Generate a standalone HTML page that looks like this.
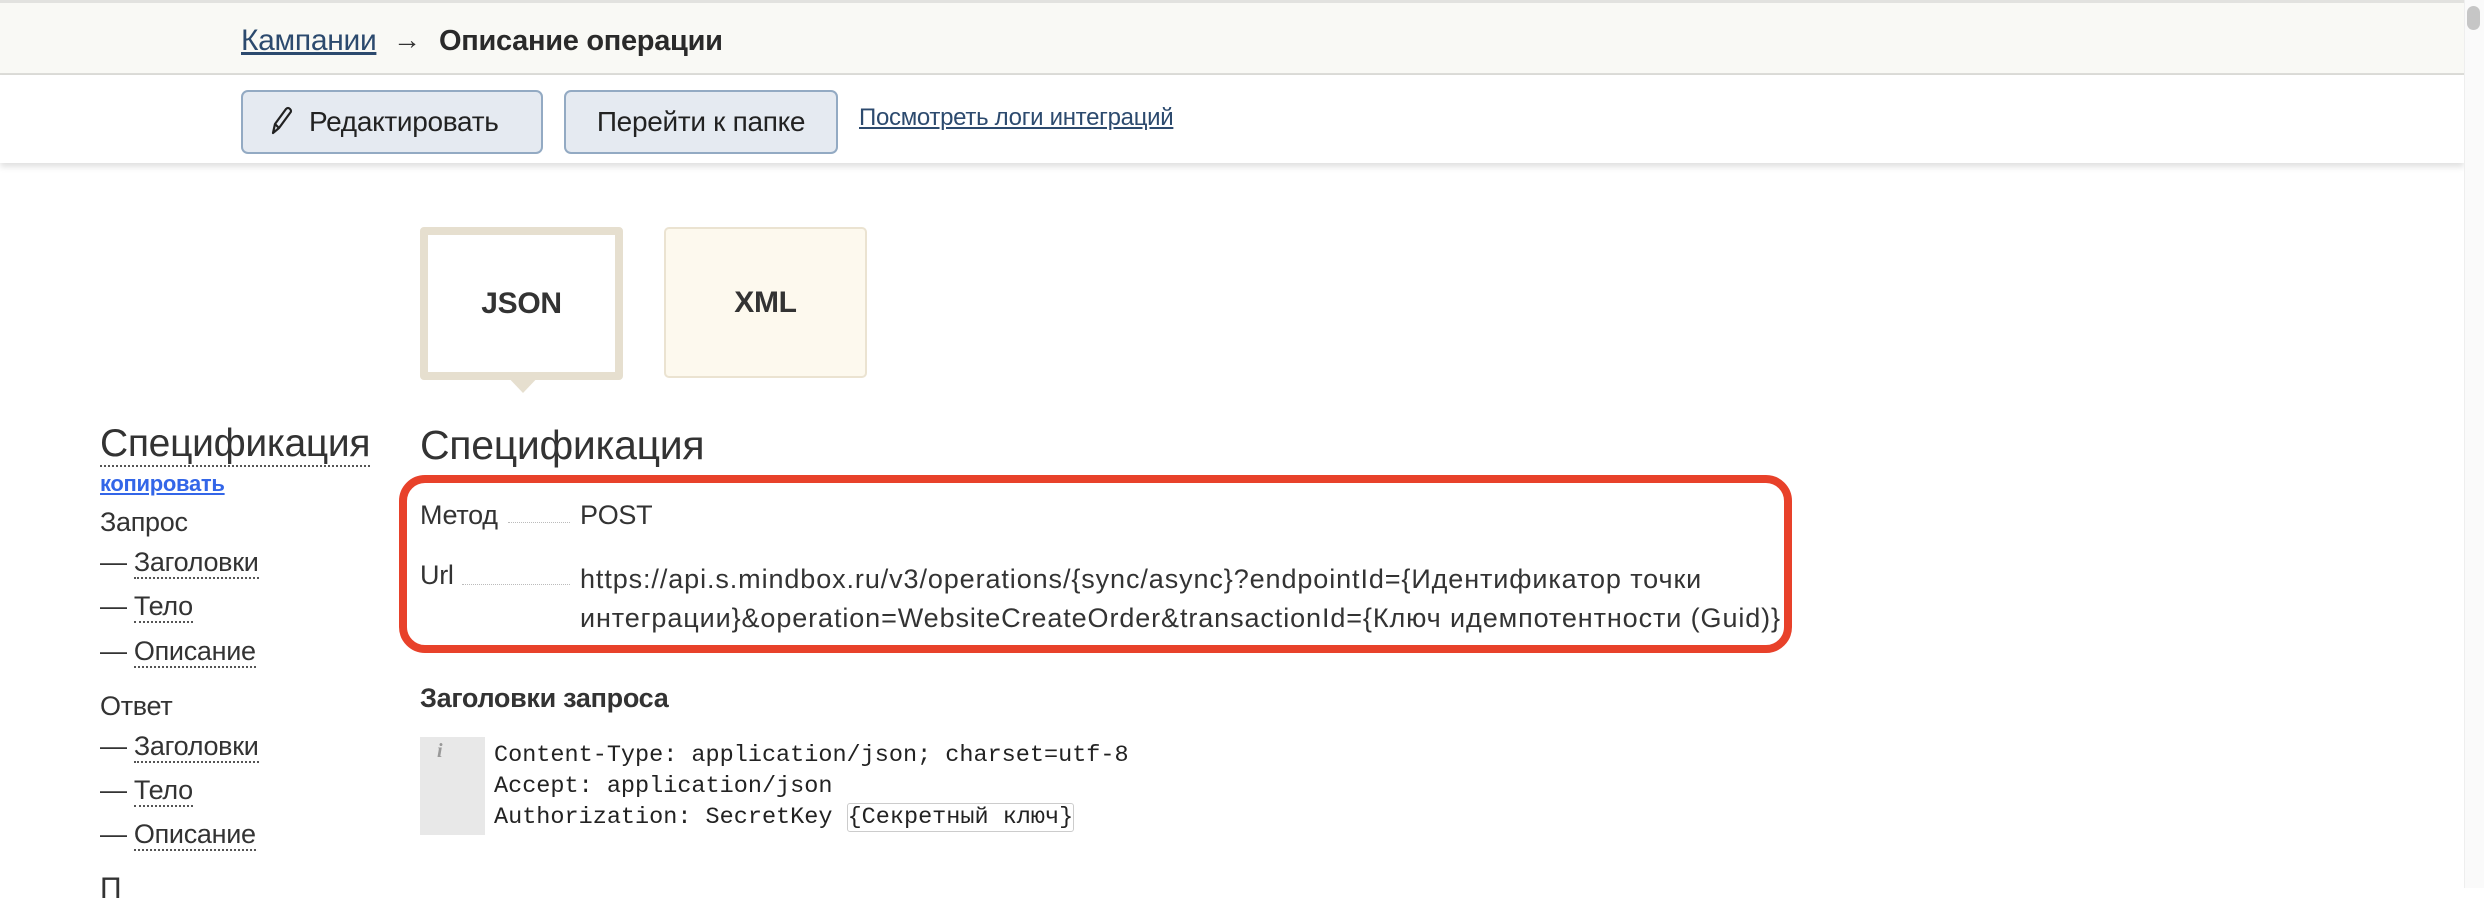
<!DOCTYPE html>
<html><head><meta charset="utf-8"><style>
*{margin:0;padding:0;box-sizing:border-box}
body{width:2484px;height:888px;overflow:hidden;background:#fff;font-family:"Liberation Sans",sans-serif;color:#333;position:relative;letter-spacing:-0.3px}
.a{position:absolute;white-space:nowrap}
.top{position:absolute;left:0;top:0;width:2464px;height:75px;background:#f9f9f5;border-top:3px solid #e2e2df;border-bottom:2px solid #dcdcd8}
.bar{position:absolute;left:0;top:75px;width:2464px;height:88px;background:#fff;box-shadow:0 4px 6px rgba(0,0,0,.12)}
.btn{position:absolute;top:90px;height:64px;background:#e5eaf1;border:2px solid #93aac3;border-radius:7px;font-size:28px;line-height:60px;color:#222}
.dash{border-bottom:2px dotted #555}
.scroll{position:absolute;left:2464px;top:0;width:20px;height:888px;background:#fafafa;border-left:1px solid #eee}
.thumb{position:absolute;left:2467px;top:6px;width:13px;height:24px;background:#c6c6c6;border-radius:7px}
.side{font-size:27px}
</style></head><body>
<div class="top"></div>
<div class="a" style="left:241px;top:24px;font-size:30px;color:#2c4a6e;text-decoration:underline;text-decoration-thickness:3px">Кампании</div>
<div class="a" style="left:393px;top:24px;font-size:28px">→</div>
<div class="a" style="left:439px;top:25px;font-size:29px;font-weight:bold;color:#2a2a2a">Описание операции</div>
<div class="bar"></div>
<div class="btn" style="left:241px;width:302px;padding-left:26px">
<svg width="24" height="30" viewBox="0 0 24 30" style="vertical-align:middle;margin-right:16px;margin-top:-6px"><path d="M4 27 L6 18 L17 3 Q19 1 21 3 Q23 5 21 7 L10 22 Z M6 18 L10 22" fill="none" stroke="#222" stroke-width="2.2" stroke-linejoin="round"/></svg>Редактировать</div>
<div class="btn" style="left:564px;width:274px;text-align:center">Перейти к папке</div>
<div class="a" style="left:859px;top:104px;font-size:24px;color:#2c4a6e;text-decoration:underline">Посмотреть логи интеграций</div>

<div class="a" style="left:420px;top:227px;width:203px;height:153px;border:8px solid #e6dfcf;border-radius:4px;background:#fff;font-size:30px;font-weight:bold;text-align:center;line-height:137px;color:#333">JSON</div>
<svg class="a" style="left:503px;top:372px" width="40" height="22"><path d="M0 0 L20 21 L40 0 Z" fill="#e6dfcf"/></svg>
<div class="a" style="left:664px;top:227px;width:203px;height:151px;border:2px solid #ebe3d1;border-radius:5px;background:#fdf9ee;font-size:30px;font-weight:bold;text-align:center;line-height:147px;color:#333">XML</div>

<div class="a" style="left:100px;top:422px;font-size:39px;color:#333"><span class="dash">Спецификация</span></div>
<div class="a" style="left:100px;top:471px;font-size:22px;font-weight:bold;color:#3366e8;text-decoration:underline">копировать</div>
<div class="a side" style="left:100px;top:507px">Запрос</div>
<div class="a side" style="left:100px;top:547px">— <span class="dash">Заголовки</span></div>
<div class="a side" style="left:100px;top:591px">— <span class="dash">Тело</span></div>
<div class="a side" style="left:100px;top:636px">— <span class="dash">Описание</span></div>
<div class="a side" style="left:100px;top:691px">Ответ</div>
<div class="a side" style="left:100px;top:731px">— <span class="dash">Заголовки</span></div>
<div class="a side" style="left:100px;top:775px">— <span class="dash">Тело</span></div>
<div class="a side" style="left:100px;top:819px">— <span class="dash">Описание</span></div>
<div class="a side" style="left:100px;top:872px;font-size:30px">П</div>

<div class="a" style="left:420px;top:422px;font-size:41px">Спецификация</div>
<div class="a" style="left:399px;top:475px;width:1393px;height:178px;border:8px solid #e8412a;border-radius:26px"></div>
<div class="a" style="left:420px;top:500px;font-size:27px">Метод</div>
<div class="a" style="left:508px;top:522px;width:62px;border-bottom:1px dotted #bbb"></div>
<div class="a" style="left:580px;top:500px;font-size:27px">POST</div>
<div class="a" style="left:420px;top:560px;font-size:27px">Url</div>
<div class="a" style="left:462px;top:584px;width:108px;border-bottom:1px dotted #bbb"></div>
<div class="a" style="left:580px;top:560px;font-size:27px;line-height:39px;letter-spacing:0.9px">https://api.s.mindbox.ru/v3/operations/{sync/async}?endpointId={Идентификатор точки<br>интеграции}&amp;operation=WebsiteCreateOrder&amp;transactionId={Ключ идемпотентности (Guid)}</div>

<div class="a" style="left:420px;top:683px;font-size:27px;font-weight:bold">Заголовки запроса</div>
<div class="a" style="left:420px;top:737px;width:65px;height:98px;background:#e8e8e8"></div>
<div class="a" style="left:437px;top:740px;font-size:20px;font-style:italic;color:#999;font-family:'Liberation Serif',serif;font-weight:bold">i</div>
<div class="a" style="left:494px;top:740px;font-family:'Liberation Mono',monospace;font-size:23.5px;line-height:31px;color:#222;letter-spacing:0">Content-Type: application/json; charset=utf-8<br>Accept: application/json<br>Authorization: SecretKey <span style="border:1px solid #ccc;border-radius:3px">{Секретный ключ}</span></div>

<div class="scroll"></div><div class="thumb"></div>
</body></html>
